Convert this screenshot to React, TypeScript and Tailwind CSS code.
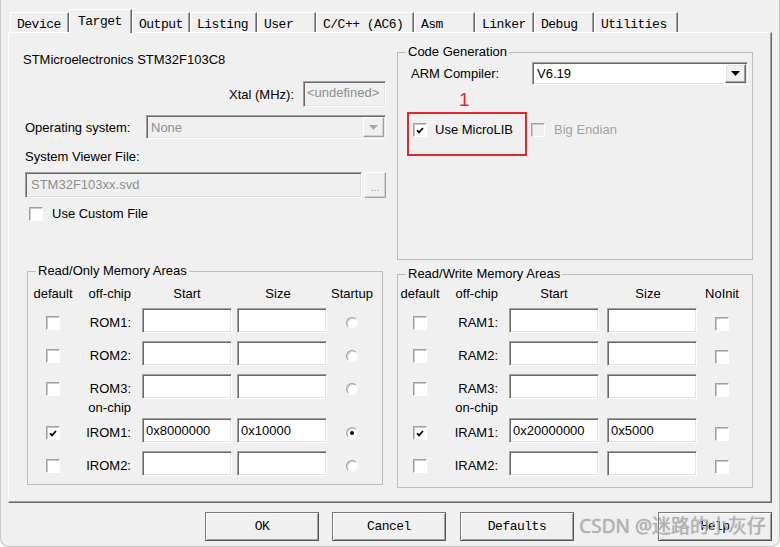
import React from "react"

const sans = "font-['Liberation_Sans',Arial,sans-serif]"
const mono = "font-['Liberation_Mono','Courier_New',monospace]"

const sunken =
  "border border-t-[#a0a0a0] border-l-[#a0a0a0] border-b-white border-r-white shadow-[inset_1px_1px_0_#696969,inset_-1px_-1px_0_#e3e3e3]"
const raised =
  "border border-t-white border-l-white border-b-[#696969] border-r-[#696969] shadow-[inset_-1px_-1px_0_#a0a0a0,inset_1px_1px_0_#e3e3e3]"
const raisedSoft =
  "border border-t-white border-l-white border-b-[#a0a0a0] border-r-[#a0a0a0] shadow-[inset_-1px_-1px_0_#d4d4d4]"

const tabs = [
  { label: "Device", w: "w-[59px]" },
  { label: "Target", w: "w-[63px]", active: true },
  { label: "Output", w: "w-[58px]" },
  { label: "Listing", w: "w-[67px]" },
  { label: "User", w: "w-[59px]" },
  { label: "C/C++ (AC6)", w: "w-[98px]" },
  { label: "Asm", w: "w-[61px]" },
  { label: "Linker", w: "w-[59px]" },
  { label: "Debug", w: "w-[60px]" },
  { label: "Utilities", w: "w-[84px]" },
]

function Arrow({ color = "#000" }: { color?: string }) {
  return (
    <svg width="9" height="5" viewBox="0 0 9 5">
      <path d="M0 0h9L4.5 5z" fill={color} />
    </svg>
  )
}

function Check({ checked, disabled }: { checked?: boolean; disabled?: boolean }) {
  return (
    <span
      className={`flex h-[14px] w-[14px] shrink-0 items-center justify-center border border-t-[#a0a0a0] border-l-[#a0a0a0] border-b-white border-r-white shadow-[inset_1px_1px_0_#c8c8c8] ${
        disabled ? "bg-[#f0f0f0]" : "bg-white"
      }`}
    >
      {checked && (
        <svg width="8" height="7" viewBox="0 0 8 7">
          <path d="M1 3.2 L3 5.4 L7 1" fill="none" stroke="#000" strokeWidth="1.7" />
        </svg>
      )}
    </span>
  )
}

function Radio({ on }: { on?: boolean }) {
  return (
    <span className="flex h-[12px] w-[12px] items-center justify-center rounded-full border border-t-[#a0a0a0] border-l-[#a0a0a0] border-b-[#f8f8f8] border-r-[#f8f8f8] bg-white shadow-[inset_1px_1px_0_#d0d0d0]">
      {on && <span className="h-[4px] w-[4px] rounded-full bg-black" />}
    </span>
  )
}

function Field({ value }: { value?: string }) {
  return <div className={`flex h-[25px] w-[90px] items-center bg-white pl-[3px] ${sunken}`}>{value}</div>
}

type MemRow = { label: string; start?: string; size?: string; checked?: boolean; on?: boolean }

const layouts = {
  left: { c1: "w-[50px]", c2: "w-[64px]", gap: "ml-[5px]" },
  right: { c1: "w-[44px]", c2: "w-[67px]", gap: "ml-[8px]" },
}

function MemGroup({
  title,
  kind,
  prefix,
  side,
  className,
  headerMt,
}: {
  title: string
  kind: "radio" | "check"
  prefix: string
  side: "left" | "right"
  className: string
  headerMt: string
}) {
  const l = layouts[side]
  const off: MemRow[] = [{ label: `${prefix}1:` }, { label: `${prefix}2:` }, { label: `${prefix}3:` }]
  const on: MemRow[] =
    prefix === "ROM"
      ? [
          { label: "IROM1:", start: "0x8000000", size: "0x10000", checked: true, on: true },
          { label: "IROM2:" },
        ]
      : [
          { label: "IRAM1:", start: "0x20000000", size: "0x5000", checked: true },
          { label: "IRAM2:" },
        ]

  const row = (r: MemRow, mt: string) => (
    <div key={r.label} className={`flex h-[25px] items-start ${mt}`}>
      <div className={`${l.c1} flex justify-center pt-[8px]`}>
        <Check checked={r.checked} />
      </div>
      <div className={`${l.c2} pr-[11px] pt-[7px] text-right leading-[16px]`}>{r.label}</div>
      <Field value={r.start} />
      <div className={l.gap}>
        <Field value={r.size} />
      </div>
      <div className="flex w-[50px] justify-center pt-[9px]">
        {kind === "radio" ? <Radio on={r.on} /> : <Check />}
      </div>
    </div>
  )

  return (
    <fieldset className={`h-[222px] w-[356px] border border-[#bdbdbd] ${className}`}>
      <legend className="ml-[8px] px-[2px] leading-[16px]">{title}</legend>
      <div className={`flex leading-[16px] ${headerMt}`}>
        <div className={`${l.c1} text-center`}>default</div>
        <div className={`${l.c2} pr-[11px] text-right`}>off-chip</div>
        <div className="w-[90px] text-center">Start</div>
        <div className={`${l.gap} w-[90px] pr-[8px] text-center`}>Size</div>
        <div className="w-[50px] text-center">{kind === "radio" ? "Startup" : "NoInit"}</div>
      </div>
      {row(off[0], "mt-[6px]")}
      {row(off[1], "mt-[8px]")}
      {row(off[2], "mt-[8px]")}
      <div className="mt-[1px] flex leading-[16px]">
        <div className={l.c1} />
        <div className={`${l.c2} pr-[11px] text-right`}>on-chip</div>
      </div>
      {row(on[0], "mt-[2px]")}
      {row(on[1], "mt-[8px]")}
    </fieldset>
  )
}

function Btn({ children, className = "" }: { children: React.ReactNode; className?: string }) {
  return (
    <div
      className={`flex h-[29px] w-[114px] items-center justify-center border border-[#7a7a7a] border-b-[#555] border-r-[#555] shadow-[inset_1px_1px_0_#fff,inset_-1px_-1px_0_#a0a0a0] ${mono} text-[13px] tracking-[-0.5px] ${className}`}
    >
      {children}
    </div>
  )
}

export default function App() {
  return (
    <div
      className={`relative h-[547px] w-[780px] overflow-hidden rounded-b-[9px] bg-[#f0f0f0] text-[13px] text-black shadow-[inset_1px_0_0_#c8c8c8,inset_-1px_0_0_#c8c8c8,inset_0_-1px_0_#c8c8c8] ${sans}`}
    >
      {/* tab strip */}
      <div className={`flex h-[32px] items-end pl-[10px] ${mono} text-[13px] leading-[14px] tracking-[-0.5px]`}>
        {tabs.map((t) =>
          t.active ? (
            <div
              key={t.label}
              className={`relative z-10 -mb-px h-[24px] ${t.w} rounded-tl-[2px] border-t border-l border-r border-white border-r-[#696969] bg-[#f0f0f0] pl-[8px] pt-[5px] shadow-[inset_-1px_0_0_#a0a0a0]`}
            >
              {t.label}
            </div>
          ) : (
            <div
              key={t.label}
              className={`h-[20px] ${t.w} border-t border-l border-r border-white border-r-[#696969] pl-[6px] pt-[5px] shadow-[inset_-1px_0_0_#a0a0a0]`}
            >
              {t.label}
            </div>
          )
        )}
      </div>

      {/* tab page */}
      <div className="ml-[8px] h-[471px] w-[764px] border border-t-white border-l-white border-b-[#696969] border-r-[#696969] shadow-[inset_-1px_-1px_0_#a0a0a0]">
        <div className="flex items-start">
          <div className="ml-[16px] mt-[19px] w-[361px]">
            <div className="-ml-[2px] leading-[16px]">STMicroelectronics STM32F103C8</div>
            <div className="mt-[13px] flex items-center justify-end">
              <span className="pt-[2px]">Xtal (MHz):</span>
              <div className={`ml-[9px] flex h-[26px] w-[83px] items-start bg-[#f0f0f0] pl-[3px] pt-[3px] leading-[16px] text-[#8e8e8e] ${sunken}`}>
                &lt;undefined&gt;
              </div>
            </div>
            <div className="mt-[8px] flex items-center justify-between">
              <span className="pt-[2px]">Operating system:</span>
              <div className={`flex h-[24px] w-[240px] items-center bg-[#f0f0f0] ${sunken}`}>
                <span className="flex-1 pl-[4px] pt-[2px] text-[#8e8e8e]">None</span>
                <span className={`mr-px flex h-[20px] w-[21px] items-center justify-center bg-[#f0f0f0] ${raisedSoft}`}>
                  <Arrow color="#a8a8a8" />
                </span>
              </div>
            </div>
            <div className="mt-[10px] leading-[16px]">System Viewer File:</div>
            <div className="mt-[7px] flex">
              <div className={`flex h-[26px] w-[337px] items-center bg-[#f0f0f0] pl-[5px] text-[#8e8e8e] ${sunken}`}>
                STM32F103xx.svd
              </div>
              <div className={`ml-[2px] flex h-[26px] w-[22px] items-end justify-center pb-[4px] text-[10px] leading-[10px] text-[#a0a0a0] ${raisedSoft}`}>
                ...
              </div>
            </div>
            <div className="mt-[9px] flex items-center pl-[4px]">
              <Check />
              <span className="ml-[9px] leading-[14px]">Use Custom File</span>
            </div>
          </div>

          <fieldset className="ml-[11px] mt-[11px] h-[216px] w-[356px] border border-[#bdbdbd]">
            <legend className="ml-[8px] px-[2px] leading-[16px]">Code Generation</legend>
            <div className="mt-[2px] flex items-center pl-[13px]">
              <span className="w-[121px]">ARM Compiler:</span>
              <div className={`flex h-[23px] w-[216px] items-center bg-white ${sunken}`}>
                <span className="flex-1 pl-[4px]">V6.19</span>
                <span className={`mr-px flex h-[19px] w-[21px] items-center justify-center bg-[#f0f0f0] ${raised}`}>
                  <Arrow />
                </span>
              </div>
            </div>
            <div className="ml-[61px] mt-[5px] h-[19px] text-[19px] leading-[19px] text-[#e3262c]">1</div>
            <div className="ml-[9px] mt-[3px] flex items-start">
              <div className="flex h-[44px] w-[120px] items-start border-2 border-[#e3262c] pl-[4px] pt-[9px]">
                <div className="flex items-center">
                  <Check checked />
                  <span className="ml-[8px] leading-[14px]">Use MicroLIB</span>
                </div>
              </div>
              <div className="ml-[4px] mt-[11px] flex items-center">
                <Check disabled />
                <span className="ml-[9px] leading-[14px] text-[#a3a3a3]">Big Endian</span>
              </div>
            </div>
          </fieldset>
        </div>

        <div className="flex items-start">
          <MemGroup
            title="Read/Only Memory Areas"
            kind="radio"
            prefix="ROM"
            side="left"
            className="ml-[18px] mt-[3px]"
            headerMt="mt-[7px]"
          />
          <MemGroup
            title="Read/Write Memory Areas"
            kind="check"
            prefix="RAM"
            side="right"
            className="ml-[14px] mt-[6px]"
            headerMt="mt-[4px]"
          />
        </div>
      </div>

      {/* dialog buttons */}
      <div className="mt-[9px] flex pl-[205px]">
        <Btn>OK</Btn>
        <Btn className="ml-[13px]">Cancel</Btn>
        <Btn className="ml-[14px]">Defaults</Btn>
        <Btn className="ml-[84px]">Help</Btn>
      </div>

      {/* watermark */}
      <div className="absolute bottom-[10px] right-[14px] font-['Noto_Sans','Noto_Sans_CJK_SC',sans-serif] text-[19px] leading-[22px] text-[#b4b4b4]/90 [text-shadow:0_0_1px_rgba(0,0,0,0.35)]">
        CSDN @迷路的小灰仔
      </div>
    </div>
  )
}
